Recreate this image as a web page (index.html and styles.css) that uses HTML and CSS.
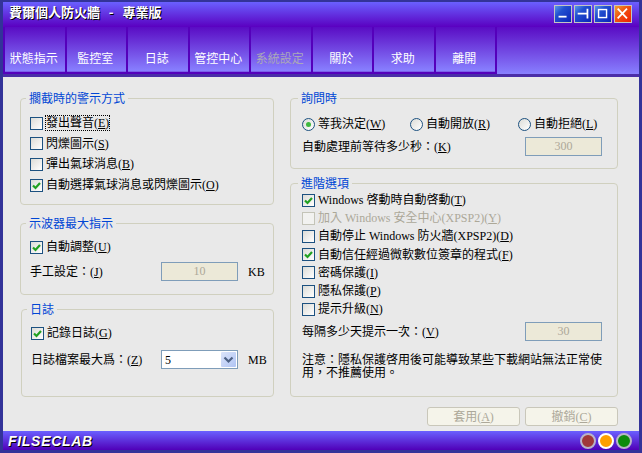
FILE: index.html
```html
<!DOCTYPE html>
<html lang="zh-Hant">
<head>
<meta charset="utf-8">
<title>費爾個人防火牆 - 專業版</title>
<link rel="stylesheet" href="styles.css">
</head>
<body>
<div class="window">
  <header class="head">
    <div class="titlebar">
      <h1 class="title">費爾個人防火牆&nbsp;&nbsp; -&nbsp;&nbsp; 專業版</h1>
      <div class="winbtns">
        <span class="winbtn"><svg viewBox="0 0 18 18" width="16" height="16"><path d="M4 12h9" stroke="#fff" stroke-width="2" fill="none"/></svg></span>
        <span class="winbtn"><svg viewBox="0 0 18 18" width="16" height="16"><path d="M3 8.5h10M14 3v11" stroke="#fff" stroke-width="2" fill="none"/></svg></span>
        <span class="winbtn"><svg viewBox="0 0 18 18" width="16" height="16"><rect x="4" y="4" width="9" height="9" stroke="#fff" stroke-width="1.6" fill="none"/></svg></span>
        <span class="winbtn winbtn-close"><svg viewBox="0 0 18 18" width="16" height="16"><path d="M3 3l10.5 11M13.5 3L3 14" stroke="#fff" stroke-width="2" fill="none"/></svg></span>
      </div>
    </div>
    <nav class="tabs">
      <a class="tab">狀態指示</a>
      <a class="tab">監控室</a>
      <a class="tab">日誌</a>
      <a class="tab">管控中心</a>
      <a class="tab tab-off">系統設定</a>
      <a class="tab">關於</a>
      <a class="tab">求助</a>
      <a class="tab">離開</a>
      <span class="tab-fill"></span>
    </nav>
  </header>

  <main class="content">
    <div class="cols">
      <div class="col">
        <fieldset class="group g-alert">
          <legend>擱截時的警示方式</legend>
          <div class="rows rows-wide">
            <label class="row"><span class="cb"></span><span class="focus">發出聲音(<u>E</u>)</span></label>
            <label class="row"><span class="cb"></span><span>閃爍圖示(<u>S</u>)</span></label>
            <label class="row"><span class="cb"></span><span>彈出氣球消息(<u>B</u>)</span></label>
            <label class="row"><span class="cb on"><svg viewBox="0 0 11 11" width="11" height="11"><path d="M2 5.5l2.5 2.5L9 3" stroke="#21a121" stroke-width="2.2" fill="none"/></svg></span><span>自動選擇氣球消息或閃爍圖示(<u>O</u>)</span></label>
          </div>
        </fieldset>
        <fieldset class="group g-scope">
          <legend>示波器最大指示</legend>
          <label class="row row-first"><span class="cb on"><svg viewBox="0 0 11 11" width="11" height="11"><path d="M2 5.5l2.5 2.5L9 3" stroke="#21a121" stroke-width="2.2" fill="none"/></svg></span><span>自動調整(<u>U</u>)</span></label>
          <div class="field">
            <span class="field-label">手工設定：(<u>J</u>)</span>
            <span class="input">10</span>
            <span class="unit">KB</span>
          </div>
        </fieldset>
        <fieldset class="group g-log">
          <legend>日誌</legend>
          <label class="row row-first"><span class="cb on"><svg viewBox="0 0 11 11" width="11" height="11"><path d="M2 5.5l2.5 2.5L9 3" stroke="#21a121" stroke-width="2.2" fill="none"/></svg></span><span>記錄日誌(<u>G</u>)</span></label>
          <div class="field">
            <span class="field-label">日誌檔案最大爲：(<u>Z</u>)</span>
            <span class="combo"><span class="combo-val">5</span><span class="combo-btn"><svg viewBox="0 0 15 15" width="15" height="15"><path d="M3.5 5.5l4 4 4-4" stroke="#4d6185" stroke-width="2.2" fill="none"/></svg></span></span>
            <span class="unit">MB</span>
          </div>
        </fieldset>
      </div>

      <div class="col">
        <fieldset class="group g-ask">
          <legend>詢問時</legend>
          <div class="radios">
            <label class="row"><span class="rd on"></span><span>等我決定(<u>W</u>)</span></label>
            <label class="row"><span class="rd"></span><span>自動開放(<u>R</u>)</span></label>
            <label class="row"><span class="rd"></span><span>自動拒絕(<u>L</u>)</span></label>
          </div>
          <div class="field field-right">
            <span class="field-label">自動處理前等待多少秒：(<u>K</u>)</span>
            <span class="input">300</span>
          </div>
        </fieldset>
        <fieldset class="group g-adv">
          <legend>進階選項</legend>
          <div class="rows rows-tight">
            <label class="row"><span class="cb on"><svg viewBox="0 0 11 11" width="11" height="11"><path d="M2 5.5l2.5 2.5L9 3" stroke="#21a121" stroke-width="2.2" fill="none"/></svg></span><span>Windows 啓動時自動啓動(<u>T</u>)</span></label>
            <label class="row row-off"><span class="cb cb-off"></span><span>加入 Windows 安全中心(XPSP2)(<u>Y</u>)</span></label>
            <label class="row"><span class="cb"></span><span>自動停止 Windows 防火牆(XPSP2)(<u>D</u>)</span></label>
            <label class="row"><span class="cb on"><svg viewBox="0 0 11 11" width="11" height="11"><path d="M2 5.5l2.5 2.5L9 3" stroke="#21a121" stroke-width="2.2" fill="none"/></svg></span><span>自動信任經過微軟數位簽章的程式(<u>F</u>)</span></label>
            <label class="row"><span class="cb"></span><span>密碼保護(<u>I</u>)</span></label>
            <label class="row"><span class="cb"></span><span>隱私保護(<u>P</u>)</span></label>
            <label class="row"><span class="cb"></span><span>提示升級(<u>N</u>)</span></label>
          </div>
          <div class="field field-right field-remind">
            <span class="field-label">每隔多少天提示一次：(<u>V</u>)</span>
            <span class="input">30</span>
          </div>
          <p class="note">注意：隱私保護啓用後可能導致某些下載網站無法正常使用，不推薦使用。</p>
        </fieldset>
      </div>
    </div>
    <div class="actions">
      <button class="btn" disabled>套用(<u>A</u>)</button>
      <button class="btn" disabled>撤銷(<u>C</u>)</button>
    </div>
  </main>

  <footer class="foot">
    <span class="brand">FILSECLAB</span>
    <div class="lights">
      <span class="light light-red"></span>
      <span class="light light-amber"></span>
      <span class="light light-green"></span>
    </div>
  </footer>
</div>
</body>
</html>
```

FILE: styles.css
```css
* { box-sizing: border-box; }
html, body { margin: 0; padding: 0; }
body {
  width: 642px;
  height: 453px;
  overflow: hidden;
  background: #333399;
  font: 12px/14px "Liberation Serif", "Noto Sans CJK TC", serif;
  color: #000;
}
.window {
  display: flex;
  flex-direction: column;
  height: 453px;
  padding: 2px 3px 3px;
}

/* head */
.head { flex: none; }
.titlebar {
  display: flex;
  align-items: center;
  height: 25px;
  padding: 0 7px 2px 6px;
  background: linear-gradient(#6a60ff, #5a00c0);
}
.title {
  margin: 0 0 3px;
  font: bold 13px/16px "Noto Sans CJK TC", sans-serif;
  color: #fff;
  text-shadow: 1px 1px 0 #000;
}
.winbtns { display: flex; gap: 2px; margin-left: auto; }
.winbtn {
  display: flex;
  align-items: center;
  justify-content: center;
  width: 18px;
  height: 18px;
  border: 1px solid #c4c4c4;
  background: linear-gradient(135deg, #5a9ae8 0, #2250d0 35%, #0a24b8 100%);
}
.winbtn-close { background: linear-gradient(135deg, #f0a030 0, #f05010 45%, #f02000 100%); }

.tabs {
  display: flex;
  gap: 2px;
  height: 50px;
  padding: 0 0 2px 2px;
  background: #5500bb;
  border-bottom: 3px solid #4a2ea8;
}
.tab {
  display: flex;
  align-items: flex-end;
  justify-content: center;
  width: 59.5px;
  padding: 0 2px 6px 0;
  background: linear-gradient(#5a0cc4, #8880ff);
  border-bottom: 1px solid #7a60e8;
  font-family: "Noto Sans CJK TC", sans-serif;
  color: #fff;
}
.tab-off { color: #aaa8b8; }
.tab-fill {
  flex: 1;
  margin-bottom: -2px;
  background: linear-gradient(#5a0cc4, #8880ff);
}

/* content */
.content {
  flex: 1;
  display: flex;
  flex-direction: column;
  background: #e9e9e9;
  padding: 14px 21px 0 17px;
}
.cols {
  display: grid;
  grid-template-columns: 254px 328px;
  column-gap: 16px;
}
.col { display: flex; flex-direction: column; }
.group {
  margin: 0;
  padding: 0 9px;
  min-width: 0;
  border: 1px solid #d0d0bf;
  border-radius: 4px;
}
.group legend {
  margin-left: -4px;
  padding: 0 3px;
  font-family: "Noto Sans CJK TC", sans-serif;
  line-height: 14px;
  color: #0046d5;
}
.g-alert { height: 114px; padding-top: 8px; }
.g-scope { height: 79px; margin-top: 11px; padding-top: 7px; }
.g-log { height: 95px; margin: 7px 0 0 1px; padding-top: 7px; }
.g-ask { height: 78px; padding: 9px 15px 8px 11px; }
.g-adv { height: 221px; margin-top: 7px; padding: 1px 15px 1px 11px; }

.rows { display: grid; }
.rows-wide { grid-auto-rows: 20.6px; }
.rows-tight { grid-auto-rows: 18.2px; }
.row {
  display: flex;
  align-items: center;
  gap: 3px;
  white-space: nowrap;
}
.row-first { height: 20px; }
.row-off { color: #aca899; }

.cb {
  flex: none;
  display: flex;
  align-items: center;
  justify-content: center;
  width: 13px;
  height: 13px;
  border: 1px solid #1c5180;
  background: linear-gradient(135deg, #dcdcd7, #fff);
}
.cb-off { border-color: #c4c4b8; background: #f2f2f0; }
.rd {
  flex: none;
  display: flex;
  align-items: center;
  justify-content: center;
  width: 13px;
  height: 13px;
  border: 1px solid #1c5180;
  border-radius: 50%;
  background: linear-gradient(135deg, #dcdcd7, #fff);
}
.rd.on::after {
  content: "";
  width: 5px;
  height: 5px;
  border-radius: 50%;
  background: #3fb83f;
}
.focus { outline: 1px dotted #000; }

.radios {
  display: grid;
  grid-template-columns: 108px 108px 1fr;
  height: 20px;
  align-items: center;
}

.field {
  display: flex;
  align-items: center;
  margin-top: 5px;
  height: 19px;
}
.field-label { width: 131px; flex: none; white-space: nowrap; }
.field-right { justify-content: space-between; margin-top: 3px; }
.field-right .field-label { width: auto; }
.field-remind { margin-top: 4px; }
.input {
  flex: none;
  width: 77px;
  height: 19px;
  border: 1px solid #7f9db9;
  background: #ece9d8;
  color: #aca899;
  text-align: center;
  line-height: 17px;
}
.unit { margin-left: 10px; }
.g-log .field { margin-top: 7px; }
.g-log .field-label { width: 130px; }
.combo {
  flex: none;
  display: flex;
  align-items: center;
  justify-content: space-between;
  width: 77px;
  height: 19px;
  padding: 0 1px 0 3px;
  border: 1px solid #7f9db9;
  background: #fff;
}
.combo-btn {
  display: flex;
  width: 15px;
  height: 15px;
  border-radius: 1px;
  background: linear-gradient(135deg, #dbe4fa, #b0c4f4);
}
.note {
  width: 300px;
  margin: 11px 0 0;
  font-family: "Noto Sans CJK TC", sans-serif;
  line-height: 13px;
}

.actions {
  display: flex;
  justify-content: flex-end;
  gap: 5px;
  margin-top: 10px;
}
.btn {
  width: 93px;
  height: 19px;
  padding: 0;
  border: 1px solid #c9c7ba;
  border-radius: 3px;
  background: #f5f4ea;
  font: inherit;
  color: #aca899;
}

/* foot */
.foot {
  flex: none;
  display: flex;
  align-items: center;
  justify-content: space-between;
  height: 19px;
  padding: 0 7px 0 5px;
  background: linear-gradient(#6a60ff, #5000b8);
}
.brand {
  font: italic bold 14px/16px "Liberation Sans", sans-serif;
  letter-spacing: 0.7px;
  color: #fff;
  text-shadow: 1px 1px 0 #000;
}
.lights { display: flex; gap: 2px; }
.light {
  width: 16px;
  height: 16px;
  border-radius: 50%;
  border: 2px solid #b8b4c8;
}
.light-red { background: #a03838; }
.light-amber { background: #ffa000; border-color: #fff; }
.light-green { background: #0c8a0c; }
```
